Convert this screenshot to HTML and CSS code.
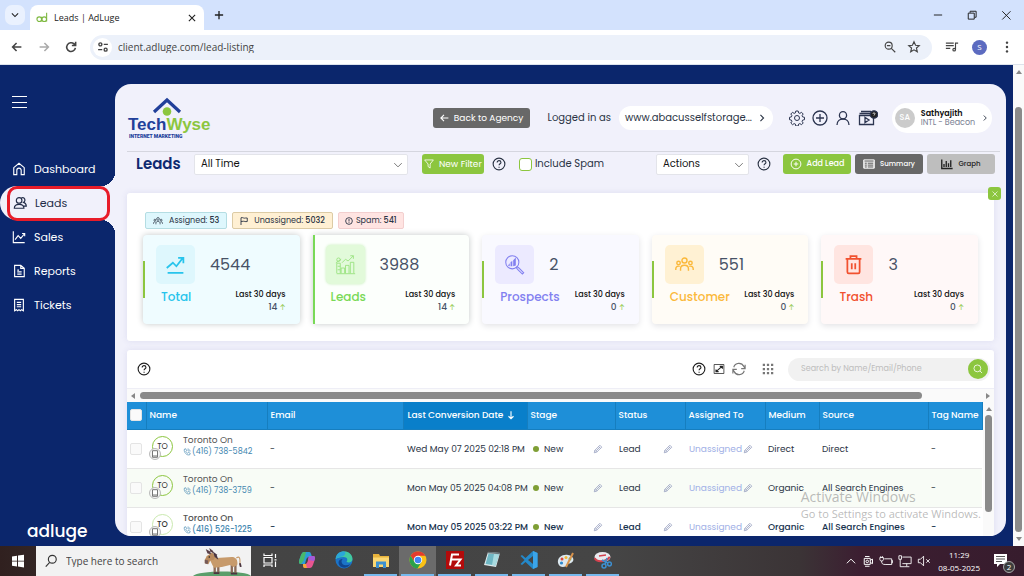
FILE: index.html
```html
<!DOCTYPE html>
<html lang="en">
<head>
<meta charset="utf-8">
<title>Leads | AdLuge</title>
<meta name="viewport" content="width=device-width, initial-scale=1">
<link rel="stylesheet" href="styles.css">
</head>
<body>
<svg class="sprite" aria-hidden="true">
  <symbol id="help" viewBox="0 0 16 16"><circle cx="8" cy="8" r="6.7"/><path d="M5.9 6.3c0-2.9 4.3-2.7 4.3-.1 0 1.5-2.1 1.6-2.1 3.2M8.1 11v1.2"/></symbol>
  <symbol id="down" viewBox="0 0 16 16"><path d="M3 5.500l5 5 5-5"/></symbol>
  <symbol id="right" viewBox="0 0 16 16"><path d="M5.500 3l5 5-5 5"/></symbol>
  <symbol id="pencil" viewBox="0 0 16 16"><path d="M2 14l1-4L11 2l3 3-8 8zM3 10l3 3M9 4l3 3M5 11l6-6"/></symbol>
  <symbol id="call" viewBox="0 0 16 16"><path d="M3 2l2.500-.5L7 5 5.500 6.500c1 2 2 3 4 4L11 9l3.500 1.500L14 13c-5 4-14-5-11-11zM9 2c3 0 5 2 5 5M9 4.500c1.500 0 2.500 1 2.500 2.500"/></symbol>
  <symbol id="tablet" viewBox="0 0 12 12"><circle cx="6" cy="6" r="5.500" fill="#f4f4f4" stroke="#aaa" stroke-width=".8"/><path d="M3.500 2.700h5v6.600h-5zM3.500 8h5" fill="#fff" stroke="#777" stroke-width="1"/></symbol>
  <symbol id="people" viewBox="0 0 24 20"><circle cx="12" cy="5" r="3.200"/><circle cx="4.500" cy="8" r="2.200"/><circle cx="19.500" cy="8" r="2.200"/><path d="M7 18v-2.500c0-6 10-6 10 0V18M1 17v-1.500c0-3 3-4 5-3M23 17v-1.500c0-3-3-4-5-3"/></symbol>
</svg>

<header class="tabs">
  <button class="tab-menu" aria-label="Search tabs"><svg class="ico s10 bold" viewBox="0 0 16 16"><use href="#down"/></svg></button>
  <div class="tab">
    <svg class="favicon" viewBox="0 0 14 12"><circle cx="3.800" cy="8" r="2.700"/><circle cx="9.600" cy="8" r="2.700"/><path d="M6.500 5.200v5.500M12.400.5v10.200"/></svg>
    <span>Leads | AdLuge</span>
    <button class="plain" aria-label="Close tab"><svg class="ico s10 bold" viewBox="0 0 16 16"><path d="M3 3l10 10M13 3L3 13"/></svg></button>
  </div>
  <button class="plain new-tab" aria-label="New tab"><svg class="ico s12 bold" viewBox="0 0 16 16"><path d="M8 2.500v11M2.500 8h11"/></svg></button>
  <div class="window-buttons">
    <button class="plain" aria-label="Minimize"><svg class="ico s12" viewBox="0 0 16 16"><path d="M2.500 8h11"/></svg></button>
    <button class="plain" aria-label="Restore"><svg class="ico s12" viewBox="0 0 16 16"><path d="M3 5.500h8v8H3zM5.500 5V3h8v8h-2"/></svg></button>
    <button class="plain" aria-label="Close"><svg class="ico s12" viewBox="0 0 16 16"><path d="M3 3l11 11M14 3L3 14"/></svg></button>
  </div>
</header>

<nav class="toolbar" aria-label="Browser">
  <button class="plain" aria-label="Back"><svg class="ico s14 bold" viewBox="0 0 16 16"><path d="M13 8H3M7.500 3.500L3 8l4.500 4.500"/></svg></button>
  <button class="plain dim" aria-label="Forward"><svg class="ico s14 bold" viewBox="0 0 16 16"><path d="M3 8h10M8.500 3.500L13 8l-4.500 4.500"/></svg></button>
  <button class="plain" aria-label="Reload"><svg class="ico s14 bold" viewBox="0 0 16 16"><path d="M13 9A5 5 0 1 1 11.500 4.500L13 6M13.300 2v4.300H9"/></svg></button>
  <div class="address">
    <button class="site" aria-label="Site information"><svg class="ico s12 bold" viewBox="0 0 16 16"><circle cx="4.500" cy="4.500" r="2"/><circle cx="11.500" cy="11.500" r="2"/><path d="M9 4.500h5.500M1.500 11.500H7"/></svg></button>
    <input class="url" aria-label="Address" value="client.adluge.com/lead-listing">
    <button class="plain" aria-label="Zoom"><svg class="ico s14" viewBox="0 0 16 16"><circle cx="6.500" cy="6.500" r="4"/><path d="M9.500 9.500l4.500 4.500M4.500 6.500h4"/></svg></button>
    <button class="plain" aria-label="Bookmark"><svg class="ico s14" viewBox="0 0 16 16"><path d="M8 2l1.800 4 4.200.4-3.200 2.800 1 4.300L8 11.200l-3.800 2.300 1-4.300L2 6.400 6.200 6z"/></svg></button>
  </div>
  <button class="plain" aria-label="Media"><svg class="ico s14" viewBox="0 0 16 16"><path d="M1 3.500h9M1 6.500h9M1 9.500h5M12 11V3.500h3"/><circle cx="10.500" cy="11" r="1.500"/></svg></button>
  <button class="account" aria-label="Account">S</button>
  <button class="plain" aria-label="Menu"><svg class="ico s14 fill" viewBox="0 0 16 16"><circle cx="8" cy="3" r="1.400"/><circle cx="8" cy="8" r="1.400"/><circle cx="8" cy="13" r="1.400"/></svg></button>
</nav>

<div class="app">
  <aside class="side">
    <button class="burger" aria-label="Menu"><i></i><i></i><i></i></button>
    <nav class="menu" aria-label="Main">
      <a href="#"><svg class="ico s14" viewBox="0 0 16 16"><path d="M2 14.500V6.500l6-5 6 5v8h-3.500v-5a2.500 2.500 0 0 0-5 0v5z"/></svg>Dashboard</a>
      <a href="#" class="active" aria-current="page"><svg class="ico s14" viewBox="0 0 16 16"><circle cx="7" cy="5" r="3.200"/><path d="M1.500 14c0-6 11-6 11 0zM9.500 2.300c4-1.500 5.500 3 2.500 5 2 .5 3 2 3.200 4.200h-3"/></svg>Leads<span class="marker"></span></a>
      <a href="#"><svg class="ico s14" viewBox="0 0 16 16"><path d="M1.500 1.500v13h13M3.500 11L7 6.500l3 3L14.500 4M11.500 4h3v3"/></svg>Sales</a>
      <a href="#"><svg class="ico s14" viewBox="0 0 16 16"><path d="M3 1.500h7L14 5v9.500H3zM10 1.500V5h4M6 7h2M6 9h5M6 11.500h5"/></svg>Reports</a>
      <a href="#"><svg class="ico s14" viewBox="0 0 16 16"><path d="M3 1.500h10v13l-2-1.200-1.500 1.200L8 13.300l-1.500 1.200L5 13.300l-2 1.200zM5.500 5h5M5.500 7.500h5M5.500 10h5"/></svg>Tickets</a>
    </nav>
    <div class="brand">adluge</div>
  </aside>

  <main class="panel">
    <header class="head">
      <div class="logo">
        <svg viewBox="0 0 30 19"><path d="M2 15L15 3l13 12" fill="none" stroke="#22409a" stroke-width="3.200"/><circle cx="15" cy="14.500" r="4.300" fill="#8cc63f"/></svg>
        <div class="word">Tech<b>Wyse</b></div>
        <small>INTERNET MARKETING</small>
      </div>
      <button class="btn gray back"><svg class="ico s10 bold" viewBox="0 0 16 16"><path d="M15 8H3M8 3L3 8l5 5"/></svg>Back to Agency</button>
      <span class="logged">Logged in as</span>
      <button class="site-pill">www.abacusselfstorage...<svg class="ico s10 bold" viewBox="0 0 16 16"><use href="#right"/></svg></button>
      <div class="tools">
        <button class="plain" aria-label="Settings"><svg class="ico s16 fine" viewBox="0 0 16 16"><circle cx="8" cy="8" r="2.500"/><path d="M6.800 1h2.400l.4 1.900 1.300.5 1.600-1.100 1.700 1.700-1.100 1.600.5 1.300 1.900.4v2.400l-1.900.4-.5 1.300 1.100 1.600-1.700 1.700-1.600-1.100-1.300.5-.4 1.900H6.800l-.4-1.900-1.300-.5-1.600 1.100L1.800 13l1.100-1.600-.5-1.300L.5 9.700V7.300l1.900-.4.5-1.300L1.800 4l1.700-1.700 1.600 1.100 1.300-.5z"/></svg></button>
        <button class="plain" aria-label="Add"><svg class="ico s16" viewBox="0 0 16 16"><circle cx="8" cy="8" r="7"/><path d="M8 4v8M4 8h8"/></svg></button>
        <button class="plain" aria-label="User"><svg class="ico s16" viewBox="0 0 16 16"><circle cx="8" cy="5.200" r="3.600"/><path d="M2 15c0-8 12-8 12 0"/></svg></button>
        <button class="plain" aria-label="Tutorials"><svg class="ico film" viewBox="0 0 20 16"><path d="M1.500 5.500h14v9h-14zM1.500 3.500h12M3 1.500h10M7 7.500v5l4-2.500z"/><circle cx="16" cy="4.500" r="3.700" fill="#222"/><path d="M15 3.800c0-1.500 2-1.300 2 0 0 .8-1 .8-1 1.700" stroke="#fff" stroke-width=".8"/></svg></button>
      </div>
      <button class="profile">
        <span class="avatar">SA</span>
        <span class="who"><strong>Sathyajith</strong><span>INTL - Beacon</span></span>
        <svg class="ico s8 bold" viewBox="0 0 16 16"><use href="#right"/></svg>
      </button>
    </header>

    <div class="filters">
      <h1>Leads</h1>
      <div class="select wide"><select aria-label="Period"><option>All Time</option></select><svg class="ico s12" viewBox="0 0 16 16"><use href="#down"/></svg></div>
      <button class="btn green"><svg class="ico s10" viewBox="0 0 16 16"><path d="M1 1.500h14L9.800 8v6.500L6.500 12V8z"/></svg>New Filter</button>
      <button class="plain" aria-label="Filter help"><svg class="ico s14" viewBox="0 0 16 16"><use href="#help"/></svg></button>
      <label class="spam"><input type="checkbox">Include Spam</label>
      <div class="select actions"><select aria-label="Actions"><option>Actions</option></select><svg class="ico s12" viewBox="0 0 16 16"><use href="#down"/></svg></div>
      <button class="plain" aria-label="Actions help"><svg class="ico s14" viewBox="0 0 16 16"><use href="#help"/></svg></button>
      <div class="views">
        <button class="btn green add"><svg class="ico s12" viewBox="0 0 16 16"><circle cx="8" cy="8" r="6.500"/><path d="M8 5v6M5 8h6"/></svg>Add Lead</button>
        <button class="btn gray"><svg class="ico s12" viewBox="0 0 16 16"><path d="M1 2.500h14v11H1z" fill="#ddd"/><path d="M2 4h12M2.500 7H5M6.500 7h7M2.500 9.500H5M6.500 9.500h7M2.500 12H5M6.500 12h7" stroke="#666"/></svg>Summary</button>
        <button class="btn light"><svg class="ico s12 bold" viewBox="0 0 16 16"><path d="M1 2v12h14.500M4 12V8M7 12V4M10 12V7M13 12V3"/></svg>Graph</button>
      </div>
    </div>

    <section class="summary" aria-label="Lead summary">
      <button class="dismiss" aria-label="Close summary"><svg class="ico s8" viewBox="0 0 16 16"><path d="M3 3l10 10M13 3L3 13"/></svg></button>
      <div class="chips">
        <span class="chip cyan"><svg class="ico s10 bold" viewBox="0 0 24 20"><use href="#people"/></svg>Assigned: <b>53</b></span>
        <span class="chip amber"><svg class="ico s8 bold" viewBox="0 0 16 16"><path d="M2 16V1.500c4-1.500 5 2 9 .5h3.500v7c-4 1-6-1-8-.5L2 9"/></svg>Unassigned: <b>5032</b></span>
        <span class="chip rose"><svg class="ico s8 bold" viewBox="0 0 16 16"><circle cx="8" cy="8" r="6.700"/><path d="M8 4v5M8 10.500V12"/></svg>Spam: <b>541</b></span>
      </div>
      <div class="cards">
        <article class="card total">
          <div class="top"><span class="tile"><svg viewBox="0 0 24 24"><path d="M2 16l7-6 4 4 7-9M15 4.500h6v6M3 21.500h18" stroke-width="2"/></svg></span><strong>4544</strong></div>
          <div class="bottom"><h2>Total</h2><p>Last 30 days<span>14 <em>↑</em></span></p></div>
        </article>
        <article class="card leads">
          <div class="top"><span class="tile"><svg viewBox="0 0 24 24"><path d="M2 22.500h21M7 22v-6h4v6M12 22v-9h4v9M17.500 22V9.500h4V22M8 10l4-4 3 2 6-6M17.500 2H21v3.500M2 22V10.500h4V22M3 14h3M3 18h3"/><circle cx="4" cy="6.500" r="2"/><path d="M1 10l6-4"/></svg></span><strong>3988</strong></div>
          <div class="bottom"><h2>Leads</h2><p>Last 30 days<span>14 <em>↑</em></span></p></div>
        </article>
        <article class="card prospects">
          <div class="top"><span class="tile"><svg viewBox="0 0 24 24"><circle cx="9.500" cy="9.500" r="7.500"/><path d="M15 14.500l2 1.500 5.500 5.500-1.500 1.500-5.500-5.500-1.500-2z"/><path class="solid" d="M4.500 13l2-2.500V14zM7.500 14V9l2-1v6zM10.500 14V7l3-3v9z"/></svg></span><strong>2</strong></div>
          <div class="bottom"><h2>Prospects</h2><p>Last 30 days<span>0 <em>↑</em></span></p></div>
        </article>
        <article class="card customer">
          <div class="top"><span class="tile"><svg viewBox="0 0 24 20"><use href="#people"/></svg></span><strong>551</strong></div>
          <div class="bottom"><h2>Customer</h2><p>Last 30 days<span>0 <em>↑</em></span></p></div>
        </article>
        <article class="card trash">
          <div class="top"><span class="tile"><svg viewBox="0 0 24 24"><path d="M3 5.500h18M8.500 5V2.500h7V5M5 6v14.500c0 1 .5 1.500 1.500 1.500h11c1 0 1.500-.5 1.500-1.500V6M10 10.500v7M14 10.500v7" stroke-width="2"/></svg></span><strong>3</strong></div>
          <div class="bottom"><h2>Trash</h2><p>Last 30 days<span>0 <em>↑</em></span></p></div>
        </article>
      </div>
    </section>

    <section class="list" aria-label="Lead list">
      <div class="list-tools">
        <button class="plain first" aria-label="List help"><svg class="ico s14" viewBox="0 0 16 16"><use href="#help"/></svg></button>
        <button class="plain" aria-label="Table help"><svg class="ico s14" viewBox="0 0 16 16"><use href="#help"/></svg></button>
        <button class="plain" aria-label="Expand"><svg class="ico s12 fine" viewBox="0 0 16 16"><path d="M1.500 2h13v12h-13z"/><path d="M4 11.500L12 4.500M9 4.500h3.500v3M4 8.500v3h3.500" stroke-width="1.500"/></svg></button>
        <button class="plain soft" aria-label="Refresh"><svg class="ico s14" viewBox="0 0 16 16"><path d="M2 6a6.200 6.200 0 0 1 11.500-1L15 7.500M15 3v4.500h-4.500M14 10a6.200 6.200 0 0 1-11.500 1L1 8.500M1 13V8.500h4.500"/></svg></button>
        <button class="plain soft grid" aria-label="Columns"><svg class="ico s12 fill" viewBox="0 0 16 16"><path d="M1 1h3v3H1zM6.500 1h3v3h-3zM12 1h3v3h-3zM1 6.500h3v3H1zM6.500 6.500h3v3h-3zM12 6.500h3v3h-3zM1 12h3v3H1zM6.500 12h3v3h-3zM12 12h3v3h-3z"/></svg></button>
        <div class="search"><input type="search" aria-label="Search" placeholder="Search by Name/Email/Phone"><button aria-label="Search"><svg class="ico s10" viewBox="0 0 16 16"><circle cx="7" cy="7" r="5.500"/><path d="M11 11l3.500 3.500"/></svg></button></div>
      </div>
      <div class="bar across" aria-hidden="true"><i class="arrow left"></i><i class="thumb"></i><i class="arrow right"></i></div>
      <div class="table-area">
        <table>
          <colgroup><col class="c-check"><col class="c-name"><col class="c-email"><col class="c-date"><col class="c-stage"><col class="c-status"><col class="c-assigned"><col class="c-medium"><col class="c-source"><col class="c-tag"></colgroup>
          <thead>
            <tr><th><input type="checkbox" aria-label="Select all"></th><th>Name</th><th>Email</th><th class="sorted">Last Conversion Date <svg class="ico s10 bold" viewBox="0 0 16 16"><path d="M8 2v12M4 10l4 4 4-4"/></svg></th><th>Stage</th><th>Status</th><th>Assigned To</th><th>Medium</th><th>Source</th><th>Tag Name</th></tr>
          </thead>
          <tbody>
            <tr>
              <td><input type="checkbox" aria-label="Select lead"></td>
              <td><div class="person"><span class="ring">TO<svg viewBox="0 0 12 12"><use href="#tablet"/></svg></span><span>Toronto On<a href="#"><svg class="ico s8" viewBox="0 0 16 16"><use href="#call"/></svg>(416) 738-5842</a></span></div></td>
              <td>-</td><td>Wed May 07 2025 02:18 PM</td>
              <td><div class="edit stage"><span>New</span><button class="plain" aria-label="Edit stage"><svg class="ico s10" viewBox="0 0 16 16"><use href="#pencil"/></svg></button></div></td>
              <td><div class="edit"><span>Lead</span><button class="plain" aria-label="Edit status"><svg class="ico s10" viewBox="0 0 16 16"><use href="#pencil"/></svg></button></div></td>
              <td><div class="edit none"><span>Unassigned</span><button class="plain" aria-label="Edit owner"><svg class="ico s10" viewBox="0 0 16 16"><use href="#pencil"/></svg></button></div></td>
              <td>Direct</td><td>Direct</td><td>-</td>
            </tr>
            <tr>
              <td><input type="checkbox" aria-label="Select lead"></td>
              <td><div class="person"><span class="ring">TO<svg viewBox="0 0 12 12"><use href="#tablet"/></svg></span><span>Toronto On<a href="#"><svg class="ico s8" viewBox="0 0 16 16"><use href="#call"/></svg>(416) 738-3759</a></span></div></td>
              <td>-</td><td>Mon May 05 2025 04:08 PM</td>
              <td><div class="edit stage"><span>New</span><button class="plain" aria-label="Edit stage"><svg class="ico s10" viewBox="0 0 16 16"><use href="#pencil"/></svg></button></div></td>
              <td><div class="edit"><span>Lead</span><button class="plain" aria-label="Edit status"><svg class="ico s10" viewBox="0 0 16 16"><use href="#pencil"/></svg></button></div></td>
              <td><div class="edit none"><span>Unassigned</span><button class="plain" aria-label="Edit owner"><svg class="ico s10" viewBox="0 0 16 16"><use href="#pencil"/></svg></button></div></td>
              <td>Organic</td><td>All Search Engines</td><td>-</td>
            </tr>
            <tr class="unread">
              <td><input type="checkbox" aria-label="Select lead"></td>
              <td><div class="person"><span class="ring">TO<svg viewBox="0 0 12 12"><use href="#tablet"/></svg></span><span>Toronto On<a href="#"><svg class="ico s8" viewBox="0 0 16 16"><use href="#call"/></svg>(416) 526-1225</a></span></div></td>
              <td>-</td><td>Mon May 05 2025 03:22 PM</td>
              <td><div class="edit stage"><span>New</span><button class="plain" aria-label="Edit stage"><svg class="ico s10" viewBox="0 0 16 16"><use href="#pencil"/></svg></button></div></td>
              <td><div class="edit"><span>Lead</span><button class="plain" aria-label="Edit status"><svg class="ico s10" viewBox="0 0 16 16"><use href="#pencil"/></svg></button></div></td>
              <td><div class="edit none"><span>Unassigned</span><button class="plain" aria-label="Edit owner"><svg class="ico s10" viewBox="0 0 16 16"><use href="#pencil"/></svg></button></div></td>
              <td>Organic</td><td>All Search Engines</td><td>-</td>
            </tr>
          </tbody>
        </table>
        <div class="bar down inner" aria-hidden="true"><i class="arrow up"></i><i class="thumb"></i></div>
      </div>
    </section>
  </main>
  <div class="bar down outer" aria-hidden="true"><i class="arrow up"></i><i class="thumb"></i><i class="arrow dn"></i></div>
  <div class="watermark"><div>Activate Windows</div><p>Go to Settings to activate Windows.</p></div>
</div>

<footer class="taskbar">
  <button class="start" aria-label="Start"><svg viewBox="0 0 14 14"><path fill="#fff" d="M1 2.500l5-.8v5H1zM7 1.500L13 .7v6H7zM1 7.500h5v5l-5-.8zM7 7.500h6v6l-6-.9z"/></svg></button>
  <label class="task-search"><svg class="ico s14" viewBox="0 0 16 16"><circle cx="9.500" cy="6" r="4.500"/><path d="M6.500 9.500L2 14.500"/></svg><input aria-label="Search Windows" placeholder="Type here to search">
    <svg class="donkey" viewBox="0 0 58 30">
      <path d="M0 30C5 24 54 24 58 30z" fill="#5a9e6a"/>
      <g transform="translate(1 2) scale(.9)">
      <path d="M23 21v8M27 21v8M42 19v10M46 17v12" stroke="#8a6a58" stroke-width="2.600"/>
      <path d="M22 28h6M41 28.500h7" stroke="#4a3540" stroke-width="2"/>
      <path d="M19 6l6 5 17-1c5 0 7 4 6 9l-4 2-4-2-9 2-9 1-4-8-4 2-2-2 2-5z" fill="#c79a6b"/>
      <path d="M16 8l4-3 4 4-2 4-4 1-2 4-4-1 0-4z" fill="#b98a5e"/>
      <path d="M13 1l5 3 1 3-4-1zM17 0l4 3 1 3-4-2z" fill="#5b4048"/>
      <path d="M21 4l4 3 2 6-4-3z" fill="#4a3540"/>
      <path d="M12 13l4 1-1 4-3-1z" fill="#755a58"/>
      <circle cx="17" cy="10" r=".9" fill="#222"/>
      <path d="M47 11c5-3 4 3 4 7" fill="none" stroke="#c79a6b" stroke-width="1.300"/><path d="M51 17l1 4" stroke="#4a3540" stroke-width="2"/>
      </g>
    </svg>
  </label>
  <div class="apps">
    <button aria-label="Task view"><svg viewBox="0 0 18 18" fill="none" stroke="#fff" stroke-width="1.200"><path d="M3 6.500h8v5.500H3zM3 2.500v2h8v-2M3 16v-2h8v2M14.500 3v4M14.500 10.500V16M13.500 8.800h2"/></svg></button>
    <button aria-label="Copilot"><svg viewBox="0 0 18 18"><path d="M6 1h5c2 0 2 2 3 5h-3C8 6 8 10 7 13H3C0 13 1 10 2 7s2-6 4-6z" fill="#2b9cd8"/><path d="M2 7c1-3 2-6 4-6h2L6 9l-3 4C0 13 1 10 2 7z" fill="#48b86b"/><path d="M11 5h4c3 0 2 3 1 6s-2 6-4 6H7c-2 0-2-2-2-4h2c3 0 3-5 4-8z" fill="#e85590"/><path d="M5 13h3l1 4H7c-2 0-2-2-2-4z" fill="#f6a63a"/><path d="M11 5h4c3 0 2 3 1 5l-6-1z" fill="#a25bd8"/></svg></button>
    <button aria-label="Edge"><svg viewBox="0 0 18 18"><circle cx="9" cy="9" r="8.500" fill="#1b74c8"/><path d="M.7 8C2-2 17-2 17.500 8c0 3-3 4-6 3 2-3 0-5-3-5-4 0-6 1-7.800 2z" fill="#41c9a0"/><path d="M.7 8C1 3 4 .5 8.500.5 12 .5 10 5 7 5.500 4 6 2 7 .7 8z" fill="#2ba7d8"/><path d="M6.500 10c0 5 5 5 9 3-3 5-11 5-12-1 0-3 2-4 4-4z" fill="#10458f"/></svg></button>
    <button class="open" aria-label="File Explorer"><svg viewBox="0 0 18 18"><path d="M1 3h6l1 2h9v11H1z" fill="#e8b33c"/><path d="M1 6.500h16V16H1z" fill="#fbd872"/><path d="M4 10.500h10V17h-3v-3.500H7V17H4z" fill="#3d92d1"/></svg></button>
    <button class="open current" aria-label="Chrome"><svg viewBox="0 0 18 18"><circle cx="9" cy="9" r="8.500" fill="#fbc116"/><path d="M1.600 4.800A8.500 8.500 0 0 1 16.400 4.800H9L5.500 11z" fill="#e33b2e"/><path d="M1.600 4.800A8.500 8.500 0 0 0 8.500 17.500L12.500 11H5.500z" fill="#2ba24c"/><circle cx="9" cy="9" r="4.200" fill="#fff"/><circle cx="9" cy="9" r="3.300" fill="#4285f4"/></svg></button>
    <button class="open" aria-label="FileZilla"><svg viewBox="0 0 18 18"><path d="M0 0h18v18H0z" fill="#b30b0b"/><path d="M4 14.500L6 3.500h7M5 8.500h5M10 8.500h4.500L10 14.500h5" fill="none" stroke="#fff" stroke-width="2"/></svg></button>
    <button class="open" aria-label="Notepad"><svg viewBox="0 0 18 18"><path d="M5 1l12 1-4 14-12-2z" fill="#dfeaec"/><path d="M5.500 2.500l10.500 1-3.500 11-10-1.500z" fill="#6fb7c4"/><path d="M11 3l5 .5-3.500 11-3.500-.5z" fill="#a9dbe0"/><path d="M5 1.500l12 1" stroke="#68757a" stroke-width="1.500"/></svg></button>
    <button class="open" aria-label="Visual Studio Code"><svg viewBox="0 0 18 18"><path d="M13 0l4.500 2v14L13 18 5.500 11 2 14 .5 13l4-4-4-4L2 4l3.500 3zM13 5L8 9l5 4z" fill="#2489ca" fill-rule="evenodd"/><path d="M13 0l4.500 2v14L13 18z" fill="#3ba5ea"/></svg></button>
    <button class="open" aria-label="Paint"><svg viewBox="0 0 18 18"><path d="M1 12C0 6 6 3 11 4c6 1 7 6 3 8-2 1-3 0-4 2s-7 4-9-2z" fill="#dce8ef"/><circle cx="5" cy="8" r="1.500" fill="#d9463a"/><circle cx="9" cy="6.500" r="1.500" fill="#f2b632"/><circle cx="4.500" cy="12" r="1.600" fill="#2d88d0"/><circle cx="13" cy="8" r="1.400" fill="#4caf50"/><path d="M16 2L9 16" stroke="#d8934b" stroke-width="2"/></svg></button>
    <button class="open" aria-label="Snipping Tool"><svg viewBox="0 0 18 18"><ellipse cx="8.500" cy="6" rx="8" ry="5" fill="#e9e9ee"/><path d="M.8 7c1 4 10 5 15-1" fill="none" stroke="#d3414e" stroke-width="2"/><path d="M5 5l7-1" stroke="#d3414e" stroke-width="1.500"/><g fill="none" stroke="#3d8fd1" stroke-width="1.500"><circle cx="10" cy="15" r="2"/><circle cx="15.500" cy="13" r="1.900"/><path d="M11 13l2-6M14 12L8 9"/></g></svg></button>
  </div>
  <div class="tray">
    <svg class="ico s12" viewBox="0 0 16 16"><path d="M2.500 11L8 5.500l5.500 5.500"/></svg>
    <svg class="ico s12" viewBox="0 0 16 16"><path d="M3 4.500h8v8H3zM11 7l3-1.500v6L11 10M4 2h6M4 15h6"/><circle cx="7" cy="8.500" r="1.700"/></svg>
    <svg class="ico s14 fine" viewBox="0 0 16 16"><path d="M6 5.500h8.500v6.500H7M14.500 7.500h1v2.500h-1M1 4v2.500c0 2 4 2 4 0V4zM2 4V2.500M4 4V2.500M3 8c0 3 1 4 4 4"/></svg>
    <svg class="ico s14 fine" viewBox="0 0 16 16"><path d="M5 3.500h10v7.500H5M10 11v3M7 14.500h6M1 2h3v4H1zM2.500 6v8.500H7"/></svg>
    <svg class="ico s14 fine" viewBox="0 0 16 16"><path d="M1.500 6H4l3.500-3.500v11L4 10H1.500zM10.500 6l4 4M14.500 6l-4 4"/></svg>
  </div>
  <div class="clock">11:29<br>08-05-2025</div>
  <button class="notice" aria-label="Notifications"><svg viewBox="0 0 18 18"><path d="M1 2h13v10H7l-3 3v-3H1z" fill="#fff"/><path d="M3 4.500h9M3 7h9M3 9.500h6" stroke="#555"/></svg><span>2</span></button>
</footer>
</body>
</html>
```
FILE: styles.css
```css
* { box-sizing: border-box; }

body {
  margin: 0;
  height: 100vh;
  min-height: 560px;
  display: flex;
  flex-direction: column;
  font: 500 9px/12px Poppins, Inter, sans-serif;
  color: #2b3445;
  overflow: hidden;
}

button, input, select { font: inherit; color: inherit; }
button { border: 0; padding: 0; cursor: pointer; display: flex; align-items: center; justify-content: center; }
a { color: inherit; text-decoration: none; }
h1, h2, p { margin: 0; }
i, em { font-style: normal; }
.plain { background: none; flex: none; }
.sprite { position: absolute; width: 0; height: 0; }

.ico { fill: none; stroke: currentColor; stroke-width: 1.300; flex: none; }
.ico.bold { stroke-width: 1.800; }
.ico.fine { stroke-width: 1; }
.ico.fill { fill: currentColor; stroke: none; }
.s8 { width: 8px; height: 8px; }
.s10 { width: 10px; height: 10px; }
.s12 { width: 12px; height: 12px; }
.s14 { width: 14px; height: 14px; }
.s16 { width: 16px; height: 16px; }

/* Browser chrome */
.tabs, .toolbar, .taskbar { font-family: "Segoe UI", "Open Sans", sans-serif; font-weight: 400; flex: none; }
.tabs { height: 30px; padding: 5px 12px 0 5px; display: flex; align-items: stretch; background: #d3e2fd; color: #222; }
.tab-menu { width: 20px; height: 20px; border-radius: 7px; background: #eaf1fe; margin-right: 5px; }
.tab { width: 174px; background: #fff; border-radius: 8px 8px 0 0; padding: 0 7px 0 6px; display: flex; align-items: center; gap: 6px; font-size: 9px; }
.tab span { flex: 1; }
.favicon { width: 12px; height: 11px; fill: none; stroke: #7fb942; stroke-width: 1.300; }
.new-tab { margin: 0 0 5px 9px; }
.window-buttons { margin: 0 0 5px auto; display: flex; gap: 22px; }
.toolbar { height: 35px; padding: 0 10px; display: flex; align-items: center; gap: 13px; background: #fff; border-bottom: 1px solid #dde3ec; color: #444; }
.dim { color: #aaa; }
.address { flex: 1; height: 25px; margin-left: -1px; border-radius: 13px; background: #ecf1fa; padding: 0 11px 0 3px; display: flex; align-items: center; gap: 10px; }
.site { width: 19px; height: 19px; border-radius: 50%; background: #fff; }
.url { flex: 1; min-width: 0; border: 0; padding: 0; margin-left: -4px; background: none; font-size: 10px; color: #444; }
.account { width: 15px; height: 15px; border-radius: 50%; background: #5c6bc0; color: #fff; font-size: 8px; }

/* Page frame */
.app { position: relative; flex: 1; min-height: 0; display: flex; background: #0b266c; }
.side { width: 115px; flex: none; display: flex; flex-direction: column; color: #fff; }
.burger { width: 15px; height: 12px; margin: 31px 0 44px 12px; background: none; flex-direction: column; align-items: stretch; justify-content: space-between; }
.burger i { height: 1px; background: #fff; }
.menu { display: flex; flex-direction: column; font-size: 11px; font-weight: 400; }
.menu a { height: 34px; padding-left: 12px; display: flex; align-items: center; gap: 8px; position: relative; }
.menu .active { background: #f1f1fb; color: #222c48; border-radius: 17px 0 0 17px; padding-left: 13px; }
.menu .active::before, .menu .active::after { content: ""; position: absolute; right: 0; width: 14px; height: 14px; }
.menu .active::before { bottom: 100%; background: radial-gradient(circle at 0 0, transparent 14px, #f1f1fb 14px); }
.menu .active::after { top: 100%; background: radial-gradient(circle at 0 100%, transparent 14px, #f1f1fb 14px); }
.marker { position: absolute; inset: 0 5px -1px 7px; border: 3px solid #e81c29; border-radius: 10px; z-index: 1; }
.brand { margin: auto 0 3px 27px; font: 500 17px/24px Poppins, Inter, sans-serif; }

.panel { flex: 1; min-width: 0; margin: 19px 7px 10px 0; padding: 0 6px 0 12px; border-radius: 16px; background: #f1f1fb; display: flex; flex-direction: column; overflow: hidden; }
.head { height: 68px; flex: none; padding-right: 8px; border-bottom: 1px solid #d5d6df; display: flex; align-items: center; }
.logo { width: 82px; margin: 1px auto 0 1px; display: flex; flex-direction: column; }
.logo svg { width: 30px; height: 19px; margin-left: 24px; }
.word { font: 700 17px/18px "Liberation Sans", sans-serif; color: #22409a; }
.word b { color: #8cc63f; }
.logo small { font: 900 5px/5px Roboto, sans-serif; color: #22409a; margin-left: 1px; }
.btn { height: 20px; border-radius: 3px; gap: 5px; color: #fff; white-space: nowrap; font-weight: 400; }
.gray { background: #686868; }
.green { background: #8cc63f; }
.light { background: #bebebe; color: #222; }
.back { width: 97px; }
.logged { margin: 0 8px 0 18px; font-size: 10px; font-weight: 400; }
.site-pill { height: 24px; width: 154px; border-radius: 12px; background: #fff; gap: 5px; font-size: 10px; font-weight: 400; }
.tools { display: flex; gap: 7px; margin: 0 14px 0 16px; color: #2c3550; }
.film { width: 20px; height: 16px; }
.profile { height: 30px; width: 100px; border-radius: 15px; background: #fff; gap: 6px; }
.avatar { width: 20px; height: 20px; border-radius: 50%; background: #cbcbcb; color: #fff; font-size: 8px; line-height: 20px; }
.who { text-align: left; font-size: 8px; line-height: 9px; font-weight: 400; color: #7b8294; }
.who strong { display: block; color: #111; font-weight: 600; }

.filters { display: flex; align-items: center; height: 22px; flex: none; margin: 1px 5px 18px 9px; gap: 8px; }
.filters h1 { font-size: 15px; line-height: 20px; font-weight: 600; color: #0f2a70; width: 50px; }
.select { position: relative; height: 21px; }
.select select { appearance: none; width: 100%; height: 100%; border: 1px solid #e3e4ea; border-radius: 2px; background: #fff; padding: 0 6px; font-size: 10px; font-weight: 400; color: #111; }
.select svg { position: absolute; right: 4px; top: 5px; color: #777; pointer-events: none; }
.wide { flex: 1; max-width: 360px; margin-right: 6px; }
.actions { width: 93px; margin-left: auto; }
.filters > .green { width: 62px; font-weight: 400; }
.spam { display: flex; align-items: center; gap: 3px; font-size: 10px; font-weight: 400; margin: 0 44px 0 5px; }
.spam input { appearance: none; width: 13px; height: 13px; margin: 0; border: 1px solid #8cc63f; border-radius: 3px; background: #fff; }
.views { display: flex; gap: 4px; margin-left: 4px; font-size: 7px; }
.views .btn { width: 68px; font-weight: 500; }
.views .add { font-size: 8px; }

.summary, .list { background: #fff; border-radius: 3px; box-shadow: 0 0 6px #dcdcf0; margin-right: 6px; }
.summary { position: relative; flex: none; padding: 19px 16px 17px; margin-bottom: 9px; }
.dismiss { position: absolute; right: -7px; top: -6px; width: 13px; height: 13px; border-radius: 3px; background: #8cc63f; color: #fff; }
.chips { display: flex; gap: 5px; margin: 0 2px 6px; font-size: 8px; }
.chip { height: 17px; border: 1px solid; border-radius: 2px; padding: 0 7px; display: flex; align-items: center; white-space: pre; font-weight: 400; }
.chip svg { margin-right: 6px; }
.chip b { font-weight: 500; }
.chip.cyan { background: #def7fd; border-color: #b4dde3; }
.chip.amber { background: #fff0d3; border-color: #dccba5; }
.chip.rose { background: #ffe4e2; border-color: #f3cfcf; padding: 0 6px; }
.chip.rose svg { margin-right: 3px; }
.cards { display: grid; grid-template-columns: repeat(5, 1fr); gap: 13px; }
.card { position: relative; min-height: 88px; border-radius: 4px; padding: 10px 13px; box-shadow: 0 2px 6px #e3e3e6; background: var(--pale); }
.card::before { content: ""; position: absolute; left: 0; top: 26px; bottom: 26px; width: 2px; background: #8cc63f; }
.top { display: flex; align-items: center; gap: 15px; }
.tile { width: 39px; height: 39px; border-radius: 5px; background: var(--tile); display: grid; place-items: center; }
.tile svg { width: 21px; height: 21px; fill: none; stroke: var(--tone); stroke-width: 1.200; }
.solid { fill: var(--tone); stroke: none; }
.top strong { font-size: 16px; line-height: 20px; font-weight: 400; color: #475266; }
.bottom { display: flex; justify-content: space-between; align-items: flex-start; padding: 5px 1px 0 5px; }
.bottom h2 { font-size: 12px; line-height: 16px; font-weight: 500; color: var(--tone); }
.bottom p { font-size: 8px; color: #111; text-align: right; white-space: nowrap; }
.bottom p span { display: block; font-size: 9px; color: #475266; }
.bottom em { color: #8cc63f; font-size: 7px; font-weight: 400; }
.total { --pale: #effcff; --tile: #def7fd; --tone: #27c4ec; }
.leads { --pale: #fcfffc; --tile: #e2fada; --tone: #79d957; }
.prospects { --pale: #f9f9ff; --tile: #eceaff; --tone: #8280f0; }
.customer { --pale: #fffcf6; --tile: #fff1d3; --tone: #fbb93c; }
.trash { --pale: #fff8f8; --tile: #ffe5e1; --tone: #f1512f; }
.total, .leads { box-shadow: 0 0 6px #c4c8c8; }
.leads .tile { box-shadow: 0 0 3px #c5eeb8; }
.leads .tile svg { stroke-width: 1; opacity: .7; }
.customer .tile svg { width: 19px; stroke-width: 1.800; }
.leads::before { top: 0; bottom: 0; background: #79d957; }

/* Lead list */
.list { flex: 1; min-height: 0; overflow: hidden; display: flex; flex-direction: column; }
.list-tools { height: 39px; flex: none; padding: 0 4px 0 10px; display: flex; align-items: center; gap: 7px; border-bottom: 1px solid #eeeef6; color: #222; }
.first { margin-right: auto; }
.soft { color: #777; }
.grid { margin: 0 7px 0 9px; }
.search { width: 202px; height: 23px; border-radius: 12px; background: #f1f1f1; padding: 0 2px 0 13px; display: flex; align-items: center; }
.search input { flex: 1; min-width: 0; border: 0; padding: 0; background: none; appearance: none; font-size: 8px; font-weight: 400; }
.search input::placeholder { color: #bdbdbd; opacity: 1; }
.search button { width: 20px; height: 20px; border-radius: 50%; background: #8cc63f; color: #fff; }
.bar { background: #fafafa; display: flex; align-items: center; flex: none; }
.thumb { background: #8a8a8a; border-radius: 4px; }
.arrow { border: 3px solid transparent; }
.across { height: 13px; padding: 0 4px; gap: 5px; }
.across .thumb { height: 7px; width: 91%; margin-right: auto; }
.arrow.left { border-right: 4px solid #888; border-left: 0; }
.arrow.right { border-left: 4px solid #888; border-right: 0; }
.down { flex-direction: column; }
.arrow.up { border-bottom: 4px solid #888; border-top: 0; }
.arrow.dn { border-top: 4px solid #888; border-bottom: 0; }
.inner { width: 12px; padding-top: 5px; gap: 4px; }
.inner .thumb { width: 7px; height: 97px; }
.outer { width: 11px; padding: 5px 0; }
.outer .thumb { width: 7px; flex: 1; margin: 33px 0 5px; }
.table-area { flex: 1; min-height: 0; display: flex; align-items: stretch; }
table { flex: 1; min-width: 0; align-self: flex-start; table-layout: fixed; border-collapse: collapse; width: 100%; }
.c-check { width: 19px; } .c-name { width: 121px; } .c-email { width: 136px; } .c-date { width: 124px; } .c-stage { width: 88px; }
.c-status { width: 70px; } .c-assigned { width: 80px; } .c-medium { width: 54px; } .c-source { width: 109px; } .c-tag { width: 54px; }
th { height: 27px; padding: 0 3px; text-align: left; background: #1e8fd8; color: #fff; font-size: 9px; font-weight: 500; border-right: 1px solid #167ebf; border-bottom: 1px solid #167ebf; white-space: nowrap; }
th svg { vertical-align: -2px; }
.sorted { background: #097fca; }
td { height: 39px; padding: 0 3px; font-weight: 400; border-bottom: 1px solid #e6e6e6; white-space: nowrap; }
td:first-child, th:first-child { padding: 0 0 0 3px; }
td:nth-child(4), th:nth-child(4) { padding: 0 0 0 4px; }
tbody tr:nth-child(2) { background: #f8fcf6; }
td input, th input { appearance: none; display: block; width: 12px; height: 12px; margin: 0; background: #fafafa; border: 1px solid #e4e4e4; border-radius: 2px; }
.person { display: flex; gap: 10px; align-items: center; padding-bottom: 5px; font-size: 9px; line-height: 12px; color: #555; }
.person a { display: flex; align-items: center; gap: 1px; color: #4387b0; font-size: 8px; line-height: 12px; }
.ring { position: relative; width: 21px; height: 21px; margin-left: 3px; border: 1px solid #8cc63f; border-radius: 50%; text-align: center; line-height: 19px; font-size: 8px; color: #333; }
.ring svg { position: absolute; left: -4px; bottom: -4px; width: 12px; height: 12px; }
.unread td { font-weight: 500; color: #17334f; }
.unread .ring { border-color: #c9e8ae; }
.edit { display: flex; align-items: center; justify-content: space-between; padding: 0 9px 0 1px; }
.edit button { color: #99a1c0; }
.stage span::before { content: ""; display: inline-block; width: 6px; height: 6px; border-radius: 50%; background: #7f9f35; margin: 0 5px 0 2px; }
.none span { color: #9fb0e6; font-weight: 400; }

.watermark { position: absolute; right: 43px; bottom: 25px; font: 400 11px/15px "Segoe UI", "Open Sans", sans-serif; color: rgba(130, 130, 130, .55); pointer-events: none; }
.watermark div { font-size: 14px; line-height: 18px; }

/* Taskbar */
.taskbar { height: 30px; display: flex; color: #fff; background: linear-gradient(90deg, #30201f 0, #444 25%, #454545 60%, #3b3436 78%, #3c1e31 84%, #371c2d); }
.start { width: 36px; background: none; }
.start svg { width: 14px; height: 14px; }
.task-search { width: 215px; background: #f2f2f2; color: #333; display: flex; align-items: center; padding-left: 8px; gap: 8px; overflow: hidden; }
.task-search input { flex: 1; min-width: 0; border: 0; padding: 0; background: none; font-size: 10px; }
.task-search input::placeholder { color: #444; opacity: 1; }
.donkey { width: 58px; height: 30px; flex: none; align-self: flex-end; }
.apps { display: flex; }
.apps button { width: 37px; background: none; border-bottom: 2px solid transparent; background-clip: padding-box; }
.apps .open { border-image: linear-gradient(90deg, transparent 4px, #76b9ed 4px, #76b9ed 33px, transparent 33px) 2; border-width: 0 0 2px; }
.apps .current { background: #6b6b6b; }
.apps svg { width: 18px; height: 18px; }
.tray { margin-left: auto; display: flex; align-items: center; gap: 5px; }
.clock { font-size: 8px; line-height: 13px; text-align: center; align-self: center; margin: 0 10px 0 7px; }
.notice { position: relative; width: 24px; margin-right: 10px; background: none; }
.notice svg { width: 18px; height: 18px; }
.notice span { position: absolute; right: -1px; bottom: 3px; width: 12px; height: 12px; border-radius: 50%; background: #3d3d3d; border: 1px solid #aaa; font-size: 8px; line-height: 10px; text-align: center; }
```
